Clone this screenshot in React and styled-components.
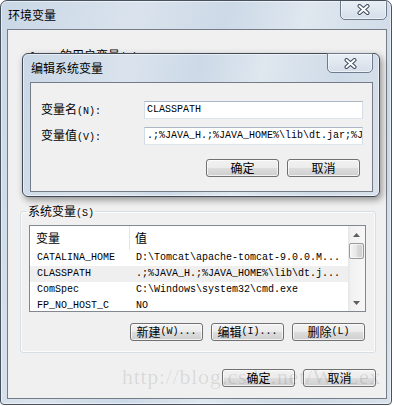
import React from "react";
import styled, { createGlobalStyle } from "styled-components";

const GlobalStyle = createGlobalStyle`
  body {
    margin: 0;
    background: #fff;
  }
  * {
    box-sizing: border-box;
  }
`;

const glass =
  "linear-gradient(105deg, #c9d7e6 0%, #dae3ed 28%, #ccd9e7 46%, #dfe7ef 62%, #cfdbe8 82%, #d9e2ec 100%)";

const Window = styled.div`
  position: relative;
  width: 392px;
  height: 405px;
  display: flex;
  flex-direction: column;
  padding: 0 4px 5px 6px;
  border: 1px solid #48525e;
  border-radius: 7px 7px 4px 4px;
  background: ${glass};
  box-shadow: inset 0 0 0 1px rgba(255, 255, 255, 0.5);
  overflow: hidden;
  font-family: "Liberation Mono", "Noto Sans CJK SC", monospace;
  font-size: 10px;
  line-height: 14px;
  color: #000;
`;

const TitleBar = styled.div`
  flex: none;
  height: 28px;
  display: flex;
  align-items: center;
`;

const Caption = styled.span`
  padding-left: 1px;
  font-family: "Noto Sans CJK SC", sans-serif;
  font-size: 12px;
`;

const CloseBox = styled.div`
  margin-left: auto;
  align-self: flex-start;
  margin-top: ${(p) => (p.$small ? -1 : -2)}px;
  width: ${(p) => (p.$small ? 46 : 47)}px;
  height: ${(p) => (p.$small ? 20 : 21)}px;
  display: flex;
  align-items: center;
  justify-content: center;
  border: 1px solid #6d7b8c;
  border-radius: 0 0 5px 5px;
  background: linear-gradient(#e9eff5, #d5dfea);
  box-shadow: inset 0 0 0 1px rgba(255, 255, 255, 0.55);
`;

const Client = styled.div`
  flex: 1;
  position: relative;
  border: 1px solid #737c87;
  background: #f0f0f0;
  padding: 15px 10px 0 12px;
`;

const Han = styled.span`
  font-family: "Noto Sans CJK SC", sans-serif;
  font-size: 12px;
`;

const UserArea = styled.div`
  height: 159px;
  padding: 3px 0 0 10px;
  white-space: pre;
`;

const Group = styled.fieldset`
  margin: 0;
  min-width: 0;
  padding: 7px 9px 11px 8px;
  border: 1px solid #d5dfe5;
  border-radius: 3px;
  box-shadow: inset 0 0 0 1px #fbfcfd;
`;

const Legend = styled.legend`
  margin-left: -2px;
  padding: 0 1px;
  height: 14px;
  line-height: 14px;
`;

const ListView = styled.div`
  height: 87px;
  display: flex;
  border: 1px solid #828790;
  background: #fff;
`;

const ListMain = styled.div`
  flex: 1;
  overflow: hidden;
`;

const Header = styled.div`
  height: 24px;
  display: flex;
  align-items: center;
`;

const HeadCell = styled.div`
  height: 100%;
  display: flex;
  align-items: center;
  width: ${(p) => (p.$first ? "100px" : "auto")};
  padding-left: ${(p) => (p.$first ? 6 : 5)}px;
  border-right: ${(p) => (p.$first ? "1px solid #e5e5e5" : "none")};
`;

const Row = styled.div`
  height: 16px;
  display: flex;
  align-items: center;
  white-space: nowrap;
  background: ${(p) => (p.$selected ? "#efefef" : "transparent")};
`;

const NameCell = styled.div`
  width: 100px;
  padding-left: 7px;
`;

const ValueCell = styled.div`
  padding-left: 6px;
`;

const ScrollBar = styled.div`
  width: 17px;
  display: flex;
  flex-direction: column;
  background: linear-gradient(90deg, #e6e6e6 0, #f1f1f1 3px, #f7f7f7 100%);
`;

const ArrowBtn = styled.div`
  height: 17px;
  display: flex;
  align-items: center;
  justify-content: center;
`;

const Thumb = styled.div`
  height: 16px;
  margin: 0 1px;
  border: 1px solid #9a9a9a;
  border-radius: 2px;
  background: linear-gradient(90deg, #f4f4f4, #e6e6e6 50%, #dadada 51%, #d0d0d0);
  box-shadow: inset 0 0 0 1px rgba(255, 255, 255, 0.6);
`;

const Track = styled.div`
  flex: 1;
`;

const ButtonRow = styled.div`
  display: flex;
  justify-content: flex-end;
  gap: 8px;
  margin-top: ${(p) => p.$top || 0}px;
  padding-right: ${(p) => p.$right || 0}px;
`;

const Button = styled.div`
  width: 73px;
  height: 18px;
  display: flex;
  align-items: center;
  justify-content: center;
  border: 1px solid #707070;
  border-radius: 3px;
  background: linear-gradient(#f2f2f2 0%, #ebebeb 50%, #dddddd 51%, #cfcfcf 100%);
  box-shadow: inset 0 0 0 1px rgba(255, 255, 255, 0.7);
  white-space: pre;
`;

const Dialog = styled.div`
  position: absolute;
  left: 14px;
  top: 23px;
  width: 358px;
  height: 144px;
  display: flex;
  flex-direction: column;
  padding: 0 6px 4px 7px;
  border: 1px solid #3f4a56;
  border-radius: 6px;
  background: ${glass};
  box-shadow: inset 0 0 0 1px rgba(255, 255, 255, 0.55),
    2px 3px 7px rgba(0, 0, 0, 0.4);
`;

const DialogClient = styled.div`
  flex: 1;
  border: 1px solid #737c87;
  background: #f0f0f0;
  padding: 18px 9px 0 10px;
`;

const FieldRow = styled.div`
  height: 18px;
  display: flex;
  align-items: center;
  & + & {
    margin-top: 8px;
  }
`;

const FieldLabel = styled.div`
  width: 103px;
`;

const TextBox = styled.div`
  flex: 1;
  height: 18px;
  display: flex;
  align-items: center;
  padding-left: 2px;
  overflow: hidden;
  white-space: nowrap;
  background: #fff;
  border: 1px solid;
  border-color: #abb7c4 #d3dde7 #dde5ee #d3dde7;
`;

const Watermark = styled.div`
  position: absolute;
  left: 121px;
  top: 365px;
  font-family: "Liberation Serif", serif;
  font-size: 22px;
  line-height: 1;
  letter-spacing: 0.7px;
  color: rgba(0, 0, 0, 0.1);
  white-space: nowrap;
  pointer-events: none;
`;

const CloseGlyph = () => (
  <svg width="13" height="11" viewBox="0 0 13 11">
    <path d="M2.5 2L10.5 9M10.5 2L2.5 9" stroke="#3d4a5b" strokeWidth="4" strokeLinecap="round" />
    <path d="M2.5 2L10.5 9M10.5 2L2.5 9" stroke="#fff" strokeWidth="2" strokeLinecap="round" />
  </svg>
);

const Arrow = ({ down }) => (
  <svg width="7" height="4" viewBox="0 0 7 4">
    <path d={down ? "M0 0h7L3.5 4z" : "M0 4h7L3.5 0z"} fill="#5e5e5e" />
  </svg>
);

const rows = [
  { name: "CATALINA_HOME", value: "D:\\Tomcat\\apache-tomcat-9.0.0.M..." },
  { name: "CLASSPATH", value: ".;%JAVA_H.;%JAVA_HOME%\\lib\\dt.j...", selected: true },
  { name: "ComSpec", value: "C:\\Windows\\system32\\cmd.exe" },
  { name: "FP_NO_HOST_C", value: "NO" },
];

export default function App() {
  return (
    <>
      <GlobalStyle />
      <Window>
        <TitleBar>
          <Caption>环境变量</Caption>
          <CloseBox>
            <CloseGlyph />
          </CloseBox>
        </TitleBar>
        <Client>
          <UserArea>
            {"lu   "}
            <Han>的用户变量</Han>(U)
          </UserArea>

          <Group>
            <Legend>
              <Han>系统变量</Han>(S)
            </Legend>
            <ListView>
              <ListMain>
                <Header>
                  <HeadCell $first>
                    <Han>变量</Han>
                  </HeadCell>
                  <HeadCell>
                    <Han>值</Han>
                  </HeadCell>
                </Header>
                {rows.map((r) => (
                  <Row key={r.name} $selected={r.selected}>
                    <NameCell>{r.name}</NameCell>
                    <ValueCell>{r.value}</ValueCell>
                  </Row>
                ))}
              </ListMain>
              <ScrollBar>
                <ArrowBtn>
                  <Arrow />
                </ArrowBtn>
                <Thumb />
                <Track />
                <ArrowBtn>
                  <Arrow down />
                </ArrowBtn>
              </ScrollBar>
            </ListView>
            <ButtonRow $top={11} $right={1}>
              <Button>
                <Han>新建</Han>(W)...
              </Button>
              <Button>
                <Han>编辑</Han>(I)...
              </Button>
              <Button>
                <Han>删除</Han>(L)
              </Button>
            </ButtonRow>
          </Group>

          <ButtonRow $top={16}>
            <Button>
              <Han>确定</Han>
            </Button>
            <Button>
              <Han>取消</Han>
            </Button>
          </ButtonRow>

          <Dialog>
            <TitleBar>
              <Caption>编辑系统变量</Caption>
              <CloseBox $small>
                <CloseGlyph />
              </CloseBox>
            </TitleBar>
            <DialogClient>
              <FieldRow>
                <FieldLabel>
                  <Han>变量名</Han>(N):
                </FieldLabel>
                <TextBox>CLASSPATH</TextBox>
              </FieldRow>
              <FieldRow>
                <FieldLabel>
                  <Han>变量值</Han>(V):
                </FieldLabel>
                <TextBox>.;%JAVA_H.;%JAVA_HOME%\lib\dt.jar;%JAVA_HOME%\lib\tools.jar</TextBox>
              </FieldRow>
              <ButtonRow $top={14} $right={3}>
                <Button>
                  <Han>确定</Han>
                </Button>
                <Button>
                  <Han>取消</Han>
                </Button>
              </ButtonRow>
            </DialogClient>
          </Dialog>
        </Client>
        <Watermark>http://blog.csdn.net/WuLex</Watermark>
      </Window>
    </>
  );
}
